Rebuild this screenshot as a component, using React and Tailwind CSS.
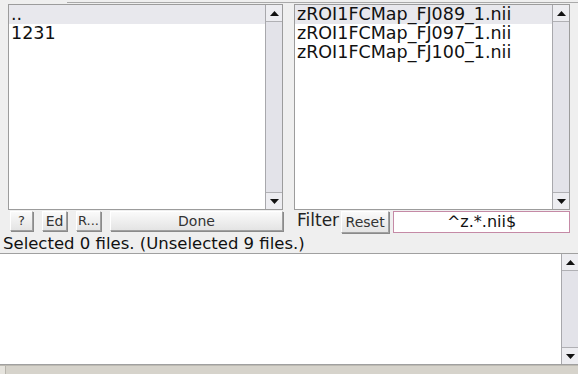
import React from "react";

const font = { fontFamily: '"DejaVu Sans", "Liberation Sans", sans-serif' };

function Arrow({ up }) {
  return (
    <svg width="9" height="5" viewBox="0 0 9 5">
      {up ? <polygon points="0,5 9,5 4.5,0" fill="#111" /> : <polygon points="0,0 9,0 4.5,5" fill="#111" />}
    </svg>
  );
}

function ScrollBar({ className = "" }) {
  return (
    <div className={"w-[17px] flex flex-col bg-[#e3e3e9] border-l border-[#a8a8ac] " + className}>
      <div className="h-[17px] flex items-center justify-center bg-[#ededf1] border-b border-[#b0b0b4]">
        <Arrow up />
      </div>
      <div className="flex-1" />
      <div className="h-[17px] flex items-center justify-center bg-[#ededf1] border-t border-[#b0b0b4]">
        <Arrow />
      </div>
    </div>
  );
}

function Browser({ items }) {
  return (
    <div className="h-[206px] flex border border-[#9c9c9c] bg-white">
      <div className="flex-1 text-[17.5px] leading-[19px] text-[#111] overflow-hidden">
        {items.map((it, i) => (
          <div key={i} className={"pl-[2px] h-[19px] whitespace-nowrap " + (i === 0 ? "bg-[#e8e8ed]" : "")}>
            {it}
          </div>
        ))}
      </div>
      <ScrollBar />
    </div>
  );
}

function Btn({ children, className = "" }) {
  return (
    <div
      className={
        "h-[20px] flex items-center justify-center text-[13px] text-[#333] border border-[#a0a0a0] border-t-white border-l-white bg-gradient-to-b from-[#fafafa] to-[#e4e4e4] shadow-[1px_1px_0_#8a8a8a] " +
        className
      }
    >
      {children}
    </div>
  );
}

export default function App() {
  return (
    <div className="w-[578px] h-[374px] bg-[#efefef] flex flex-col overflow-hidden" style={font}>
      <div className="mt-[2px] ml-[67px] h-px bg-[#a9a9a9]" />
      <div className="mt-px flex gap-[11px] pl-[8px] pr-[8px]">
        <div className="w-[275px] flex flex-col">
          <Browser items={["..", "1231"]} />
          <div className="mt-[1px] flex gap-[9px] pl-[2px]">
            <Btn className="w-[23px]">?</Btn>
            <Btn className="w-[25px] text-[14px]">Ed</Btn>
            <Btn className="w-[25px] text-[12px]">R...</Btn>
            <Btn className="flex-1 text-[14px]">Done</Btn>
          </div>
        </div>
        <div className="flex-1 flex flex-col">
          <Browser items={["zROI1FCMap_FJ089_1.nii", "zROI1FCMap_FJ097_1.nii", "zROI1FCMap_FJ100_1.nii"]} />
          <div className="mt-[1px] flex items-start pl-[3px]">
            <div className="text-[17px] leading-[19px] text-[#222]">Filter</div>
            <Btn className="ml-[2px] w-[48px] h-[22px] text-[14px]">Reset</Btn>
            <div className="ml-[4px] flex-1 h-[22px] border border-[#c58aa6] bg-white flex items-center justify-center text-[16px] text-[#111]">
              ^z.*.nii$
            </div>
          </div>
        </div>
      </div>
      <div className="mt-[1px] pl-[3px] text-[16.5px] leading-[19px] text-[#111] whitespace-nowrap">
        Selected 0 files. (Unselected 9 files.)
      </div>
      <div className="h-[112px] flex border-t border-b border-[#a0a0a0] bg-white">
        <div className="flex-1" />
        <ScrollBar className="w-[15px]" />
      </div>
      <div className="flex-1 flex bg-[#d6d3cb] border-t border-[#bdbab2]">
        <div className="w-[6px] bg-[#e6e4de] border-r border-[#b8b5ad]" />
      </div>
    </div>
  );
}
